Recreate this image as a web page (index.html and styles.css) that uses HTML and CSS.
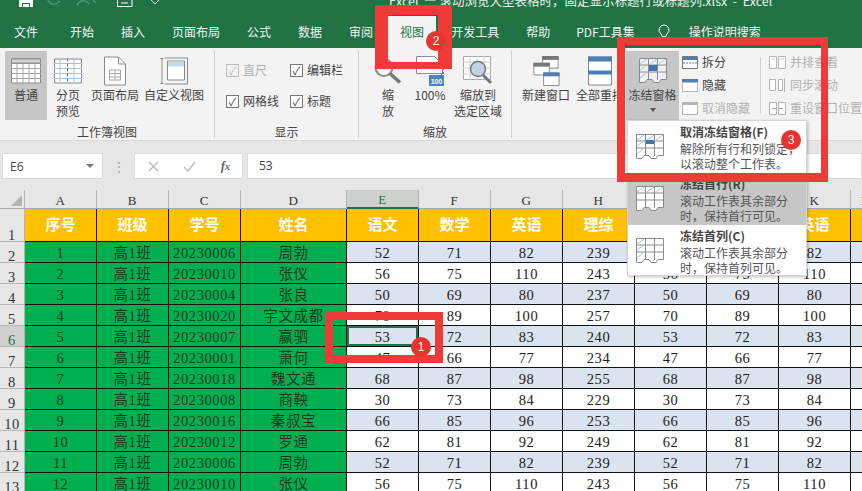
FILE: index.html
```html
<!DOCTYPE html>
<html lang="zh-CN">
<head>
<meta charset="utf-8">
<title>Excel</title>
<link rel="stylesheet" href="styles.css">
</head>
<body>
<div class="app">
  <header class="titlebar">
    <svg class="qat-save" width="14" height="7" viewBox="0 0 14 7"><path d="M0 0h14v7H0z" fill="#fff"/><path d="M3 3h8v4H3z" fill="#217346"/><path d="M4 4h6v3H4z" fill="#fff"/></svg>
    <svg class="qat-undo" width="18" height="6" viewBox="0 0 18 6"><path d="M2 0c2 5 7 6 12 1" fill="none" stroke="#4f9272" stroke-width="1.500"/></svg>
    <svg class="qat-redo" width="24" height="6" viewBox="0 0 24 6"><path d="M2 5c3-5 8-6 12-1M18 0l3 3" fill="none" stroke="#4f9272" stroke-width="1.500"/></svg>
    <svg class="qat-form" width="16" height="8" viewBox="0 0 16 8"><path d="M.5 0v6.500h14.500V0M4 3h7" fill="none" stroke="#fff"/></svg>
    <svg class="qat-drop" width="10" height="5" viewBox="0 0 10 5"><path d="M1 0l4 4 4-4" fill="none" stroke="#d5e5dc"/></svg>
    <span class="title-text">Excel&nbsp;&nbsp;—&nbsp;滚动浏览大型表格时，固定显示标题行或标题列.xlsx&nbsp;&nbsp;-&nbsp;&nbsp;Excel</span>
  </header>

  <nav class="tabs">
    <span class="tab tab-first">文件</span>
    <span class="tab">开始</span>
    <span class="tab">插入</span>
    <span class="tab">页面布局</span>
    <span class="tab">公式</span>
    <span class="tab">数据</span>
    <span class="tab">审阅</span>
    <span class="tab tab-active">视图</span>
    <span class="tab">开发工具</span>
    <span class="tab">帮助</span>
    <span class="tab tab-pdf">PDF工具集</span>
    <span class="tab tab-search">
      <svg width="14" height="16" viewBox="0 0 14 16"><path d="M7 1a5 5 0 0 0-3 9c.7.6 1 1.300 1 2.500h4c0-1.200.3-1.900 1-2.500A5 5 0 0 0 7 1zM5 14.500h4" fill="none" stroke="#fff"/></svg>
      操作说明搜索
    </span>
  </nav>

  <section class="ribbon">
    <div class="group group-book">
      <div class="group-body">
        <div class="rbtn rbtn-active w-normal">
          <svg width="30" height="25" viewBox="0 0 30 25"><path d="M.5.500h29v24H.5z" fill="#fff" stroke="#8a8a8a"/><path d="M0 5h30M0 10h30M0 15h30M0 20h30M6 0v25M12 0v25M18 0v25M24 0v25" stroke="#a6a6a6"/><path d="M.5.500h29v4H.5z" fill="#d4d4d4" stroke="#8a8a8a"/></svg>
          <span>普通</span>
        </div>
        <div class="rbtn w-break">
          <svg width="28" height="25" viewBox="0 0 28 25"><path d="M.5.500h27v24H.5z" fill="#fff" stroke="#8a8a8a"/><path d="M0 5h28M0 10h28M0 15h28M0 20h28M6 0v25M20 0v25" stroke="#a9c4e0"/><path d="M13.500 0v25" stroke="#3f76b0" stroke-dasharray="3 2"/></svg>
          <span>分页<br>预览</span>
        </div>
        <div class="rbtn w-layout">
          <svg width="22" height="29" viewBox="0 0 22 29"><path d="M.5.500h14l7 7v21H.5z" fill="#fff" stroke="#8a8a8a"/><path d="M14.500.500v7h7" fill="none" stroke="#8a8a8a"/><path d="M5.500 13.500h11v10h-11zM5 17h12M5 20.500h12M11 13v10" fill="none" stroke="#a6a6a6"/></svg>
          <span>页面布局</span>
        </div>
        <div class="rbtn w-custom">
          <svg width="28" height="27" viewBox="0 0 28 27"><path d="M.5 1h3M2 1v25M.5 26h3M5 .500h23M5 26.500h23M27.500.500v26" fill="none" stroke="#8a8a8a"/><path d="M7.500 3.500h17v19h-17z" fill="#fff" stroke="#8a8a8a"/><path d="M8 4h16v5H8z" fill="#c5d6e8"/></svg>
          <span>自定义视图</span>
        </div>
      </div>
      <div class="group-label">工作簿视图</div>
    </div>

    <div class="group group-show">
      <div class="checks">
        <label class="check check-off"><span class="box">✓</span>直尺</label>
        <label class="check"><span class="box">✓</span>编辑栏</label>
        <label class="check"><span class="box">✓</span>网格线</label>
        <label class="check"><span class="box">✓</span>标题</label>
      </div>
      <div class="group-label">显示</div>
    </div>

    <div class="group group-zoom">
      <div class="group-body">
        <div class="rbtn w-zoom">
          <svg width="28" height="27" viewBox="0 0 28 27"><circle cx="10" cy="10" r="8.500" fill="#f7f7f7" stroke="#8a8a8a" stroke-width="2"/><path d="M16 16l10 9" stroke="#777" stroke-width="3.500"/></svg>
          <span>缩<br>放</span>
        </div>
        <div class="rbtn w-hundred">
          <svg width="28" height="30" viewBox="0 0 28 30"><path d="M.5.500h18l8 8v9h-26z" fill="#fff" stroke="#8a8a8a"/><path d="M27.500 8v10" stroke="#7a6fb0" stroke-dasharray="2 2"/><path d="M22 22l5-5" stroke="#4b84bd"/><path d="M13 19h15v11H13z" fill="#4b84bd"/><text x="20.500" y="28" class="tag">100</text></svg>
          <span>100%</span>
        </div>
        <div class="rbtn w-select">
          <svg width="30" height="30" viewBox="0 0 30 30"><path d="M.5.500h27v23H.5z" fill="#fff" stroke="#a6a6a6"/><path d="M0 6h28M0 12h28M0 18h28M7 0v24M14 0v24M21 0v24" stroke="#cfcfcf"/><circle cx="15" cy="13" r="7.500" fill="#bfd2e6" stroke="#777" stroke-width="1.500"/><path d="M20 19l8 8" stroke="#777" stroke-width="3"/></svg>
          <span>缩放到<br>选定区域</span>
        </div>
      </div>
      <div class="group-label">缩放</div>
    </div>

    <div class="group group-window">
      <div class="group-body">
        <div class="rbtn w-new">
          <svg width="27" height="31" viewBox="0 0 27 31"><path d="M9.500.500h16v12h-16z" fill="#fff" stroke="#8a8a8a"/><path d="M9 0h17v4H9z" fill="#777"/><path d="M.5 7.500h16v12H.500z" fill="#fff" stroke="#8a8a8a"/><path d="M0 7h17v4H0z" fill="#777"/><path d="M10.500 17.500h16v13h-16z" fill="#fff" stroke="#8a8a8a"/><path d="M10 17h17v4H10z" fill="#4b7fb5"/></svg>
          <span>新建窗口</span>
        </div>
        <div class="rbtn w-arrange">
          <svg width="24" height="29" viewBox="0 0 24 29"><path d="M.5.500h23v28H.500z" fill="#fff" stroke="#8a8a8a"/><path d="M0 0h24v5H0zM0 14h24v4H0z" fill="#4b7fb5"/></svg>
          <span>全部重排</span>
        </div>
        <div class="rbtn rbtn-active w-freeze">
          <svg width="28" height="26" viewBox="0 0 28 26"><path d="M.5.500h27v21H22l-2 3h-5l-2-3H8l-2 3H.500z" fill="#eef2f6" stroke="#8a8a8a"/><path d="M0 7h28M0 14h28M9.500 0v22M18.500 0v22" stroke="#8a8a8a"/><path d="M1 6l7-5M1 12l7-5M1 20l7-6M11 6l7-5M20 6l7-5" stroke="#a9c4e0"/><path d="M10 7h8v6h-8z" fill="#3f76b0"/></svg>
          <span>冻结窗格</span>
          <i class="caret"></i>
        </div>
        <div class="stack">
          <div class="srow"><svg width="16" height="13" viewBox="0 0 16 13"><path d="M.5.500h15v12H.500z" fill="#fff" stroke="#777"/><path d="M1 1h14v3H1z" fill="#4b7fb5"/><path d="M1 7h14" stroke="#4b7fb5" stroke-dasharray="2 1"/></svg>拆分</div>
          <div class="srow"><svg width="16" height="13" viewBox="0 0 16 13"><path d="M.5 3.500h15v9H.500z" fill="#fff" stroke="#777" stroke-dasharray="1 1"/><path d="M0 0h16v3H0z" fill="#4b7fb5"/></svg>隐藏</div>
          <div class="srow srow-off"><svg width="16" height="13" viewBox="0 0 16 13"><path d="M.5.500h15v12H.500z" fill="#fff" stroke="#b5b5b5"/><path d="M0 0h16v3H0z" fill="#b5b5b5"/></svg>取消隐藏</div>
        </div>
        <div class="vsep"></div>
        <div class="stack stack-side">
          <div class="srow srow-off"><svg width="17" height="13" viewBox="0 0 17 13"><path d="M.5.500h7v12h-7zM9.500.500h7v12h-7z" fill="#fff" stroke="#b5b5b5"/><path d="M2 3h4M11 3h4" stroke="#c8c8c8"/></svg>并排查看</div>
          <div class="srow srow-off"><svg width="17" height="14" viewBox="0 0 17 14"><path d="M.5 1.500h6v11h-6zM9.500 1.500h4v11h-4zM15.500 0v14" fill="#fff" stroke="#b5b5b5"/></svg>同步滚动</div>
          <div class="srow srow-off"><svg width="17" height="13" viewBox="0 0 17 13"><path d="M.5.500h7v12h-7zM9.500.500h7v12h-7z" fill="#fff" stroke="#b5b5b5"/><path d="M3 6.500h4M14 6.500h-4" stroke="#a0a0a0"/></svg>重设窗口位置</div>
        </div>
      </div>
    </div>
  </section>

  <section class="fbar">
    <div class="namebox">E6<i class="caret caret-name"></i></div>
    <div class="fdots">⋮</div>
    <div class="fbtns">
      <svg width="11" height="11" viewBox="0 0 11 11"><path d="M1 1l9 9M10 1l-9 9" stroke="#bdbdbd" stroke-width="1.500"/></svg>
      <svg width="13" height="11" viewBox="0 0 13 11"><path d="M1 6l4 4 7-9" fill="none" stroke="#bdbdbd" stroke-width="1.500"/></svg>
      <span class="fx">f<small>x</small></span>
    </div>
    <div class="finput">53</div>
  </section>

  <table class="sheet">
    <colgroup>
      <col class="c-rh"><col class="c-n"><col class="c-n"><col class="c-n"><col class="c-d"><col class="c-n"><col class="c-n"><col class="c-n"><col class="c-n"><col class="c-n"><col class="c-n"><col class="c-n"><col class="c-l">
    </colgroup>
    <thead>
      <tr class="colhead">
        <th class="corner"><i class="corner-tri"></i></th><th>A</th><th>B</th><th>C</th><th>D</th><th class="col-on">E</th><th>F</th><th>G</th><th>H</th><th>I</th><th>J</th><th>K</th><th>L</th>
      </tr>
    </thead>
    <tbody>
      <tr class="r-head"><th>1</th><td>序号</td><td>班级</td><td>学号</td><td>姓名</td><td>语文</td><td>数学</td><td>英语</td><td>理综</td><td>语文</td><td>数学</td><td>英语</td><td></td></tr>
      <tr class="band"><th>2</th><td class="g">1</td><td class="g">高1班</td><td class="g">20230006</td><td class="g">周勃</td><td>52</td><td>71</td><td>82</td><td>239</td><td>52</td><td>71</td><td>82</td><td></td></tr>
      <tr><th>3</th><td class="g">2</td><td class="g">高1班</td><td class="g">20230010</td><td class="g">张仪</td><td>56</td><td>75</td><td>110</td><td>243</td><td>56</td><td>75</td><td>110</td><td></td></tr>
      <tr class="band"><th>4</th><td class="g">3</td><td class="g">高1班</td><td class="g">20230004</td><td class="g">张良</td><td>50</td><td>69</td><td>80</td><td>237</td><td>50</td><td>69</td><td>80</td><td></td></tr>
      <tr><th>5</th><td class="g">4</td><td class="g">高1班</td><td class="g">20230020</td><td class="g">宇文成都</td><td>70</td><td>89</td><td>100</td><td>257</td><td>70</td><td>89</td><td>100</td><td></td></tr>
      <tr class="band"><th class="row-on">6</th><td class="g">5</td><td class="g">高1班</td><td class="g">20230007</td><td class="g">嬴驷</td><td class="cell-on">53</td><td>72</td><td>83</td><td>240</td><td>53</td><td>72</td><td>83</td><td></td></tr>
      <tr><th>7</th><td class="g">6</td><td class="g">高1班</td><td class="g">20230001</td><td class="g">萧何</td><td>47</td><td>66</td><td>77</td><td>234</td><td>47</td><td>66</td><td>77</td><td></td></tr>
      <tr class="band"><th>8</th><td class="g">7</td><td class="g">高1班</td><td class="g">20230018</td><td class="g">魏文通</td><td>68</td><td>87</td><td>98</td><td>255</td><td>68</td><td>87</td><td>98</td><td></td></tr>
      <tr><th>9</th><td class="g">8</td><td class="g">高1班</td><td class="g">20230008</td><td class="g">商鞅</td><td>30</td><td>73</td><td>84</td><td>229</td><td>30</td><td>73</td><td>84</td><td></td></tr>
      <tr class="band"><th>10</th><td class="g">9</td><td class="g">高1班</td><td class="g">20230016</td><td class="g">秦叔宝</td><td>66</td><td>85</td><td>96</td><td>253</td><td>66</td><td>85</td><td>96</td><td></td></tr>
      <tr><th>11</th><td class="g">10</td><td class="g">高1班</td><td class="g">20230012</td><td class="g">罗通</td><td>62</td><td>81</td><td>92</td><td>249</td><td>62</td><td>81</td><td>92</td><td></td></tr>
      <tr class="band"><th>12</th><td class="g">11</td><td class="g">高1班</td><td class="g">20230006</td><td class="g">周勃</td><td>52</td><td>71</td><td>82</td><td>239</td><td>52</td><td>71</td><td>82</td><td></td></tr>
      <tr><th>13</th><td class="g">12</td><td class="g">高1班</td><td class="g">20230010</td><td class="g">张仪</td><td>56</td><td>75</td><td>110</td><td>243</td><td>56</td><td>75</td><td>110</td><td></td></tr>
    </tbody>
  </table>

  <div class="menu">
    <div class="mitem">
      <svg width="28" height="26" viewBox="0 0 28 26"><path d="M.5.500h27v21H22l-2 3h-5l-2-3H8l-2 3H.500z" fill="#fff" stroke="#8a8a8a"/><path d="M0 7h28M0 14h28M9.500 0v22M18.500 0v22" stroke="#8a8a8a"/><path d="M1 6l7-5M1 12l7-5M1 20l7-6M11 6l7-5M20 6l7-5" stroke="#a9c4e0"/><path d="M10 6h8v4h-8z" fill="#3f76b0"/></svg>
      <div class="mtext"><b>取消冻结窗格(F)</b><p>解除所有行和列锁定，<br>以滚动整个工作表。</p></div>
    </div>
    <div class="mitem mitem-on">
      <svg width="28" height="26" viewBox="0 0 28 26"><path d="M.5.500h27v21H22l-2 3h-5l-2-3H8l-2 3H.500z" fill="#fff" stroke="#8a8a8a"/><path d="M0 7h28M0 14h28M9.500 0v22M18.500 0v22" stroke="#8a8a8a"/><path d="M1 6l7-5M11 6l7-5M20 6l7-5" stroke="#a9c4e0"/></svg>
      <div class="mtext"><b>冻结首行(R)</b><p>滚动工作表其余部分<br>时，保持首行可见。</p></div>
    </div>
    <div class="mitem">
      <svg width="28" height="26" viewBox="0 0 28 26"><path d="M.5.500h27v21H22l-2 3h-5l-2-3H8l-2 3H.500z" fill="#fff" stroke="#8a8a8a"/><path d="M0 7h28M0 14h28M9.500 0v22M18.500 0v22" stroke="#8a8a8a"/><path d="M1 6l7-5M1 12l7-5M1 20l7-6" stroke="#a9c4e0"/></svg>
      <div class="mtext"><b>冻结首列(C)</b><p>滚动工作表其余部分<br>时，保持首列可见。</p></div>
    </div>
  </div>

  <div class="mark mark-view"></div>
  <div class="mark mark-freeze"></div>
  <div class="mark mark-cell"></div>
  <div class="badge badge-1">1</div>
  <div class="badge badge-2">2</div>
  <div class="badge badge-3">3</div>
</div>
</body>
</html>
```
FILE: styles.css
```css
* { box-sizing: border-box; }
html, body { margin: 0; padding: 0; }
body { width: 862px; height: 491px; overflow: hidden; background: #fff; font-family: "Noto Sans CJK SC", "Noto Sans", sans-serif; }
.app { position: relative; width: 862px; height: 491px; overflow: hidden; }

.titlebar { height: 16px; background: #217346; display: flex; align-items: flex-start; color: #e8f1ec; font-size: 13px; position: relative; }
.titlebar svg { flex: none; display: block; }
.qat-save { margin-left: 19px; }
.qat-undo { margin-left: 13px; }
.qat-redo { margin-left: 11px; }
.qat-form { margin-left: 18px; }
.qat-drop { margin-left: 17px; }
.title-text { margin-left: 229px; margin-top: -7px; line-height: 16px; white-space: nowrap; font-size: 12.500px; }

.tabs { height: 32px; background: #217346; display: flex; color: #fff; font-size: 12px; gap: 3px; }
.tab { padding: 0 12px; line-height: 32px; white-space: nowrap; color: #f0f5f2; }
.tab-first { padding: 0 17px 0 14px; }
.tab-active { background: #f3f3f3; color: #217346; }
.tab-pdf { margin-left: -1px; }
.tab-search { display: flex; align-items: center; gap: 18px; padding-left: 7px; }
.tab-search svg { flex: none; }

.ribbon { height: 93px; background: #f3f3f3; display: flex; border-bottom: 1px solid #d8d8d8; color: #444; font-size: 12px; line-height: 16px; }
.group { position: relative; height: 87px; margin-top: 3px; border-right: 1px solid #d0d0d0; display: flex; flex-direction: column; }
.group-book { width: 215px; padding-left: 5px; }
.group-show { width: 144px; }
.group-zoom { width: 153px; }
.group-window { flex: 1; border-right: 0; }
.group-body { display: flex; height: 69px; }
.group-label { position: absolute; left: 0; right: 0; bottom: -2px; text-align: center; line-height: 16px; color: #444; font-size: 12px; }
.rbtn { display: flex; flex-direction: column; align-items: center; text-align: center; padding-top: 5px; height: 69px; flex: none; }
.rbtn svg { flex: none; height: 30px; display: block; margin-bottom: 1px; }
.rbtn span { line-height: 16px; white-space: nowrap; display: block; }
.rbtn-active { background: #c6c6c6; }
.w-normal { width: 42px; }
.w-break { width: 42px; }
.w-layout { width: 52px; }
.w-custom { width: 66px; }
.w-zoom { width: 44px; margin-left: 7px; }
.w-hundred { width: 40px; }
.w-select { width: 56px; }
.w-new { width: 54px; margin-left: 7px; }
.w-arrange { width: 54px; }
.w-freeze { width: 53px; position: relative; margin-left: -1px; }
.caret { display: block; width: 0; height: 0; border: 3px solid transparent; border-top: 4px solid #555; border-bottom: 0; margin-top: 5px; }
.stack { display: flex; flex-direction: column; gap: 7px; margin-left: 3px; padding-top: 3px; width: 78px; }
.stack-side { margin-left: 8px; width: 92px; }
.srow { display: flex; align-items: center; gap: 4px; height: 16px; white-space: nowrap; }
.srow svg { flex: none; }
.srow-off { color: #b1b1b1; }
.vsep { width: 1px; height: 56px; margin-top: 6px; background: #d0d0d0; flex: none; }

.checks { display: grid; grid-template-columns: 64px 70px; row-gap: 15px; padding: 11px 0 0 11px; }
.check { display: flex; align-items: center; gap: 4px; height: 16px; white-space: nowrap; }
.box { width: 13px; height: 13px; border: 1px solid #777; background: #fff; font-size: 11px; line-height: 11px; text-align: center; color: #444; flex: none; }
.check-off { color: #b1b1b1; }
.check-off .box { border-color: #bdbdbd; color: #bdbdbd; background: #f3f3f3; }
.tag { font: bold 7px "Liberation Sans", sans-serif; fill: #fff; text-anchor: middle; }

.fbar { height: 49px; background: #e6e6e6; display: flex; align-items: flex-start; padding: 12px 0 0 2px; color: #444; font-size: 13px; }
.namebox { width: 101px; height: 26px; background: #fff; display: flex; align-items: center; justify-content: space-between; padding: 0 8px 0 7px; border: 1px solid #dcdcdc; font-family: "Open Sans", sans-serif; font-size: 12px; }
.caret-name { margin-top: 0; border-width: 4px; border-top: 4px solid #777; border-bottom: 0; }
.fdots { width: 31px; text-align: center; color: #a8a8a8; line-height: 26px; font-size: 14px; }
.fbtns { width: 109px; height: 26px; background: #fff; border: 1px solid #dcdcdc; display: flex; align-items: center; justify-content: space-between; padding: 0 12px 0 13px; }
.fx { font: italic 13px "Liberation Serif", serif; color: #666; font-weight: bold; }
.fx small { font-size: 10px; }
.finput { flex: 1; height: 26px; background: #fff; margin-left: 4px; border: 1px solid #dcdcdc; padding-left: 11px; line-height: 24px; font-family: "Open Sans", sans-serif; font-size: 12px; }

.sheet { table-layout: fixed; width: 880px; border-collapse: separate; border-spacing: 0; font-family: "Liberation Serif", "Noto Sans CJK SC", serif; font-size: 14.500px; line-height: 17px; letter-spacing: .6px; color: #222; }
.c-rh { width: 25px; }
.c-n { width: 72px; }
.c-d { width: 106px; }
.c-l { width: 29px; }
.sheet th { font-weight: normal; background: #e6e6e6; color: #333; padding: 0; }
.sheet td { padding: 3px 0 0; height: 21px; text-align: center; border-right: 1px solid #111; border-bottom: 1px solid #111; background: #fff; overflow: hidden; white-space: nowrap; }
.sheet .colhead th { height: 18px; padding-top: 2px; border-right: 1px solid #b5b5b5; border-bottom: 1px solid #a8a8a8; font-size: 13px; line-height: 15px; }
.corner { position: relative; }
.corner-tri { position: absolute; right: 2px; bottom: 2px; width: 0; height: 0; border-left: 11px solid transparent; border-bottom: 11px solid #b3b3b3; }
.col-on { background: #cfcfcf !important; border-bottom: 2px solid #217346 !important; color: #217346 !important; }
.sheet tbody th { height: 21px; border-right: 1px solid #b5b5b5; border-bottom: 1px solid #b5b5b5; vertical-align: bottom; line-height: 12px; }
.sheet tbody tr.r-head th, .sheet tbody tr.r-head td { height: 33px; }
.sheet .r-head td { padding-top: 1px; background: #ffc000; color: #fff; font-weight: bold; font-size: 15px; letter-spacing: 0; }
.band td { background: #dae3f0; }
.sheet td.g { background: #00b050; color: #14381f; }
.row-on { background: #cfcfcf !important; color: #217346 !important; }
.sheet td.cell-on { position: relative; box-shadow: inset 0 0 0 2px #217346; }

.menu { position: absolute; left: 627px; top: 120px; width: 180px; height: 156px; background: #fff; border: 1px solid #d4d4d4; box-shadow: 1px 1px 3px rgba(0,0,0,.25); display: flex; flex-direction: column; color: #555; font-size: 12px; }
.mitem { height: 52px; display: flex; padding: 3px 0 0 8px; flex: none; }
.mitem svg { flex: none; margin-top: 10px; }
.mitem-on { background: #c6c6c6; }
.mtext { margin-left: 16px; line-height: 16px; }
.mtext b { display: block; color: #444; font-weight: bold; line-height: 16px; }
.mtext p { margin: 1px 0 0; line-height: 15px; color: #555; }

.mark { position: absolute; border-style: solid; border-color: #f03a3a; }
.mark-view { left: 375px; top: 5px; width: 77px; height: 64px; border-width: 10px 14px 7px 13px; }
.mark-freeze { left: 617px; top: 37px; width: 211px; height: 145px; border-width: 8px 7px 9px 8px; }
.mark-cell { left: 325px; top: 312px; width: 118px; height: 51px; border-width: 8px; }
.badge { position: absolute; width: 20px; height: 20px; border-radius: 50%; background: #e8332f; color: #fff; font: 12px/20px "Liberation Sans", sans-serif; text-align: center; }
.badge-1 { left: 411px; top: 337px; }
.badge-2 { left: 426px; top: 31px; }
.badge-3 { left: 781px; top: 130px; }
```
